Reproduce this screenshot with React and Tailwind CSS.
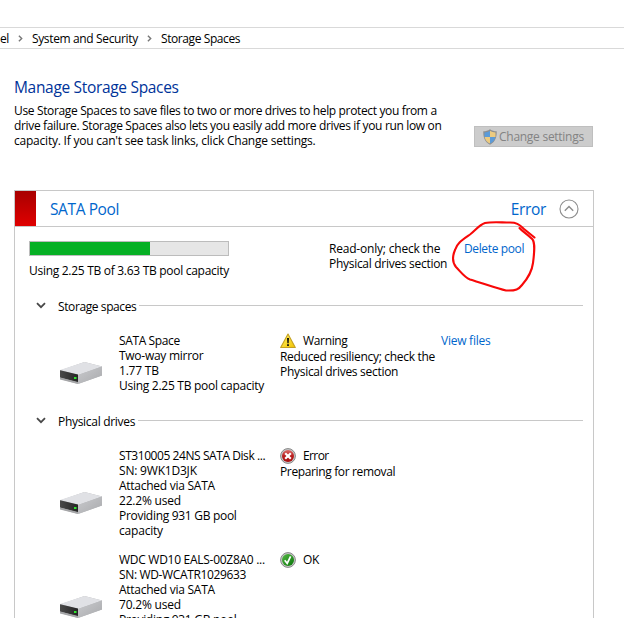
import React from "react";

function Drive() {
  return (
    <svg width="44" height="24" viewBox="0 0 44 24" className="block">
      <defs>
        <linearGradient id="side" x1="0" y1="0" x2="1" y2="1">
          <stop offset="0" stopColor="#c9cacd" />
          <stop offset="1" stopColor="#a9aaad" />
        </linearGradient>
        <linearGradient id="front" x1="0" y1="0" x2="1" y2="0">
          <stop offset="0" stopColor="#4a4a4a" />
          <stop offset="1" stopColor="#242424" />
        </linearGradient>
      </defs>
      <path d="M1 9.5 L25.5 1 L43 5.5 V14.5 L19 23 L1 18 Z" fill="#b4b5b7" />
      <path d="M1 9 L25.5 1 L43 5.5 L19 14 Z" fill="#e0e1e5" />
      <path d="M19 14 L43 5.5 V14.5 L19 23 Z" fill="url(#side)" />
      <path d="M1 9.3 L19 13.5 V21.5 L1 16.5 Z" fill="url(#front)" />
      <path d="M1 16.5 L19 21 V23 L1 18.5 Z" fill="#a5a6a8" />
      <rect x="15" y="16" width="2.5" height="2" fill="#2ee62e" />
    </svg>
  );
}

function Shield() {
  return (
    <svg width="16" height="16" viewBox="0 0 16 16" className="block">
      <path d="M8 .3 C6 1.8 3.8 2.3 1.3 2.3 C1.1 8 2.5 13 8 15.8 C13.5 13 14.9 8 14.7 2.3 C12.2 2.3 10 1.8 8 .3Z" fill="#8e8e8e" />
      <path d="M8 1.7 C6.3 2.9 4.5 3.3 2.5 3.4 L2.5 8 H8Z" fill="#5c9bd8" />
      <path d="M8 1.7 C9.7 2.9 11.5 3.3 13.5 3.4 L13.5 8 H8Z" fill="#eccb80" />
      <path d="M2.6 8 C3.1 11 5 13.2 8 14.6 V8Z" fill="#eccb80" />
      <path d="M13.4 8 C12.9 11 11 13.2 8 14.6 V8Z" fill="#5c9bd8" />
    </svg>
  );
}

function WarningIcon() {
  return (
    <svg width="16" height="16" viewBox="0 0 16 16" className="block shrink-0">
      <defs>
        <linearGradient id="warn" x1="0" y1="0" x2="1" y2="1">
          <stop offset="0" stopColor="#fff36a" />
          <stop offset="1" stopColor="#f2c200" />
        </linearGradient>
      </defs>
      <path d="M8 1.1 L15.3 14.5 H.7Z" fill="url(#warn)" stroke="#c3a022" strokeWidth="1.1" strokeLinejoin="round" />
      <path d="M7 5 H9 L8.7 10.2 H7.3Z" fill="#111" />
      <rect x="7.1" y="11.2" width="1.8" height="1.8" fill="#111" />
    </svg>
  );
}

function ErrorIcon() {
  return (
    <svg width="16" height="16" viewBox="0 0 16 16" className="block shrink-0">
      <defs>
        <linearGradient id="err" x1="0" y1="0" x2="0" y2="1">
          <stop offset="0" stopColor="#db6b68" />
          <stop offset=".5" stopColor="#b81f1f" />
          <stop offset="1" stopColor="#a80e0e" />
        </linearGradient>
      </defs>
      <circle cx="8" cy="8" r="7.4" fill="#c9c9c9" stroke="#878787" />
      <circle cx="8" cy="8" r="6" fill="url(#err)" />
      <path d="M5.2 5.2 L10.8 10.8 M10.8 5.2 L5.2 10.8" stroke="#fff" strokeWidth="2.2" />
    </svg>
  );
}

function OkIcon() {
  return (
    <svg width="16" height="16" viewBox="0 0 16 16" className="block shrink-0">
      <defs>
        <linearGradient id="ok" x1="0" y1="0" x2="1" y2="1">
          <stop offset="0" stopColor="#55b945" />
          <stop offset="1" stopColor="#087409" />
        </linearGradient>
      </defs>
      <circle cx="8" cy="8" r="7.4" fill="#c9c9c9" stroke="#878787" />
      <circle cx="8" cy="8" r="6" fill="url(#ok)" />
      <path d="M4.7 8.3 L7.2 11.4 L10.6 4.3" fill="none" stroke="#fff" strokeWidth="1.7" />
    </svg>
  );
}

function Crumb() {
  return (
    <svg width="5" height="7" viewBox="0 0 5 7" className="block">
      <path d="M.9 .7 L3.7 3.5 L.9 6.3" fill="none" stroke="#777" strokeWidth="1.4" />
    </svg>
  );
}

function Section({ title, className }) {
  return (
    <div className="flex h-4 items-center pl-[21px] pr-2.5">
      <svg width="10" height="7" viewBox="0 0 10 7" className="-mt-0.5 block">
        <path d="M1 1.2 L5 5.2 L9 1.2" fill="none" stroke="#484848" strokeWidth="1.8" />
      </svg>
      <span className={"ml-3 " + className}>{title}</span>
      <span className="-mt-px ml-[3px] h-px flex-1 bg-[#c8c8c8]" />
    </div>
  );
}

function Row({ lines, drive, icon, status, detail, link }) {
  return (
    <div className="flex">
      <div className={"w-[90px] shrink-0 pl-11 " + drive}>
        <Drive />
      </div>
      <div className="ml-3.5 w-[161px] shrink-0">
        {lines.map(([text, tracking]) => (
          <div key={text} className={tracking}>{text}</div>
        ))}
      </div>
      <div className="w-[161px] shrink-0">
        <div className="flex h-4 items-start gap-[7px]">
          {icon}
          {status}
        </div>
        {detail}
      </div>
      {link}
    </div>
  );
}

export default function App() {
  return (
    <div className="h-[618px] w-[624px] overflow-hidden whitespace-nowrap bg-white pt-[27px] font-['Open_Sans','Noto_Sans',sans-serif] text-[12px] leading-[15px] text-black">
      <nav className="flex h-[22px] items-center border-y border-[#d9d9d9]">
        <span className="w-[9px] tracking-[-0.4px]">el</span>
        <span className="ml-[9px] w-[14px]"><Crumb /></span>
        <span className="w-[106px] tracking-[-0.36px]">System and Security</span>
        <span className="ml-[9px] w-[14px]"><Crumb /></span>
        <span className="tracking-[-0.41px]">Storage Spaces</span>
      </nav>

      <header className="flex h-[141px] pl-3.5 pt-[27px]">
        <div className="w-[460px]">
          <h1 className="text-[15.5px] leading-[22px] tracking-[-0.32px] text-[#003399]">Manage Storage Spaces</h1>
          <p className="mt-[5px] tracking-[-0.35px]">Use Storage Spaces to save files to two or more drives to help protect you from a</p>
          <p className="tracking-[-0.34px]">drive failure. Storage Spaces also lets you easily add more drives if you run low on</p>
          <p className="tracking-[-0.22px]">capacity. If you can't see task links, click Change settings.</p>
        </div>
        <button className="mt-[50px] flex h-[21px] w-[119px] items-center gap-px border border-[#bfbfbf] bg-[#cccccc] pl-[7px] text-[#838383]">
          <Shield />
          <span className="tracking-[-0.27px]">Change settings</span>
        </button>
      </header>

      <main className="relative ml-3.5 h-[500px] w-[580px] border border-[#c8c8c8]">
        <div className="flex h-9 items-center border-b border-[#c8c8c8] text-[15.5px] text-[#0066cc]">
          <span className="h-full w-[21px] bg-linear-to-b from-[#a80000] to-[#e00000]" />
          <span className="ml-3.5 flex-1 pt-0.5 tracking-[-0.4px]">SATA Pool</span>
          <span className="pt-0.5 tracking-[-0.35px]">Error</span>
          <svg width="20" height="20" viewBox="0 0 20 20" className="ml-[13px] mr-3.5 block">
            <circle cx="10" cy="10" r="9" fill="none" stroke="#8d8d8d" strokeWidth="1.1" />
            <path d="M5.8 11.7 L10 7.5 L14.2 11.7" fill="none" stroke="#8d8d8d" strokeWidth="1.4" />
          </svg>
        </div>

        <div className="flex h-[71px] pl-3.5 pt-3.5">
          <div className="w-[300px]">
            <div className="h-[15px] w-[200px] border border-[#bcbcbc] bg-[#e6e6e6]">
              <div className="h-full w-[120px] bg-[#06b025]" />
            </div>
            <div className="mt-[7px] tracking-[-0.29px]">Using 2.25 TB of 3.63 TB pool capacity</div>
          </div>
          <div className="w-[135px]">
            <div className="tracking-[-0.2px]">Read-only; check the</div>
            <div className="tracking-[-0.29px]">Physical drives section</div>
          </div>
          <a className="tracking-[-0.37px] text-[#0066cc]">Delete pool</a>
        </div>

        <Section title="Storage spaces" className="tracking-[-0.4px]" />
        <div className="h-[99px] pt-[19px]">
          <Row
            lines={[
              ["SATA Space", "tracking-[-0.38px]"],
              ["Two-way mirror", "tracking-[-0.27px]"],
              ["1.77 TB", "tracking-[-0.2px]"],
              ["Using 2.25 TB pool capacity", "tracking-[-0.27px]"],
            ]}
            drive="pt-7"
            icon={<WarningIcon />}
            status={<span className="tracking-[-0.34px]">Warning</span>}
            detail={
              <>
                <div className="tracking-[-0.3px]">Reduced resiliency; check the</div>
                <div className="tracking-[-0.29px]">Physical drives section</div>
              </>
            }
            link={<a className="tracking-[-0.25px] text-[#0066cc]">View files</a>}
          />
        </div>

        <Section title="Physical drives" className="tracking-[-0.3px]" />
        <div className="flex flex-col gap-3.5 pt-[19px]">
          <Row
            lines={[
              ["ST310005 24NS SATA Disk ...", "tracking-[-0.43px]"],
              ["SN: 9WK1D3JK", "tracking-[-0.2px]"],
              ["Attached via SATA", "tracking-[-0.26px]"],
              ["22.2% used", "tracking-[-0.2px]"],
              ["Providing 931 GB pool", "tracking-[-0.3px]"],
              ["capacity", "tracking-[-0.2px]"],
            ]}
            drive="pt-[43px]"
            icon={<ErrorIcon />}
            status={<span className="tracking-[-0.6px]">Error</span>}
            detail={<div className="tracking-[-0.36px]">Preparing for removal</div>}
          />
          <Row
            lines={[
              ["WDC WD10 EALS-00Z8A0 ...", "tracking-[-0.28px]"],
              ["SN: WD-WCATR1029633", "tracking-[-0.36px]"],
              ["Attached via SATA", "tracking-[-0.26px]"],
              ["70.2% used", "tracking-[-0.2px]"],
              ["Providing 931 GB pool", "tracking-[-0.3px]"],
            ]}
            drive="pt-[43px]"
            icon={<OkIcon />}
            status={<span className="tracking-[-0.3px]">OK</span>}
          />
        </div>

        <svg width="90" height="76" viewBox="448 218 90 76" className="pointer-events-none absolute left-[433px] top-[27px]">
          <path
            d="M534.5 237.5 L524 229 C519 224 516 222.5 510 222.5 C501 222.5 492 221.5 485 223 C479 225 476 230 470 234.5 C462 240 457 243 455 250 C452 257 452 262 456 267 C461 272 464 277 470 279.5 C482 283 497 288.5 506 290.5 C516 291 519 289 522 285 C529 277 532 271 533 263 C535 248 535 240 531 238 C527 234 522 231 519.5 228"
            fill="none" stroke="#f80808" strokeWidth="2.1" strokeLinecap="round" strokeLinejoin="round"
          />
        </svg>
      </main>
    </div>
  );
}
